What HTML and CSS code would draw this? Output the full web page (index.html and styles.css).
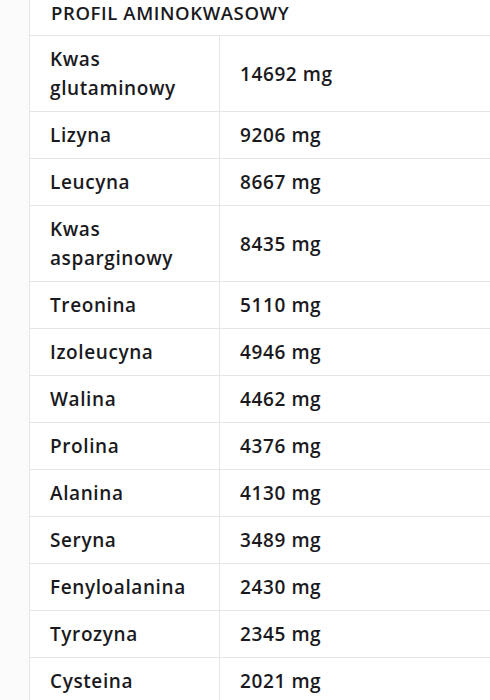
FILE: index.html
```html
<!DOCTYPE html>
<html lang="pl">
<head>
<meta charset="utf-8">
<title>Profil aminokwasowy</title>
<link rel="stylesheet" href="styles.css">
</head>
<body>
<div class="wrap">
<table class="amino">
<thead>
<tr><th colspan="2">PROFIL AMINOKWASOWY</th></tr>
</thead>
<tbody>
<tr><td class="name">Kwas<br>glutaminowy</td><td>14692 mg</td></tr>
<tr><td class="name">Lizyna</td><td>9206 mg</td></tr>
<tr><td class="name">Leucyna</td><td>8667 mg</td></tr>
<tr><td class="name">Kwas<br>asparginowy</td><td>8435 mg</td></tr>
<tr><td class="name">Treonina</td><td>5110 mg</td></tr>
<tr><td class="name">Izoleucyna</td><td>4946 mg</td></tr>
<tr><td class="name">Walina</td><td>4462 mg</td></tr>
<tr><td class="name">Prolina</td><td>4376 mg</td></tr>
<tr><td class="name">Alanina</td><td>4130 mg</td></tr>
<tr><td class="name">Seryna</td><td>3489 mg</td></tr>
<tr><td class="name">Fenyloalanina</td><td>2430 mg</td></tr>
<tr><td class="name">Tyrozyna</td><td>2345 mg</td></tr>
<tr><td class="name">Cysteina</td><td>2021 mg</td></tr>
</tbody>
</table>
</div>
</body>
</html>
```
FILE: styles.css
```css
html, body {
  margin: 0;
  padding: 0;
  background: #fbfbfb;
}
.wrap {
  padding-left: 29px;
  overflow: hidden;
  height: 700px;
}
.amino {
  border-collapse: collapse;
  width: 520px;
  background: #fff;
  font-family: "Open Sans", "Noto Sans", sans-serif;
  font-weight: 600;
  color: #1a1a1e;
  font-size: 19px;
  letter-spacing: 0.6px;
}
.amino th {
  text-align: left;
  font-size: 18.5px;
  font-weight: 600;
  letter-spacing: 0.6px;
  line-height: 26px;
  padding: 0 21px 9px 21px;
  border-left: 1px solid #e6e6e6;
  border-bottom: 1px solid #e6e6e6;
}
.amino td {
  line-height: 29px;
  padding: 9px 21px 8px 20px;
  border: 1px solid #e6e6e6;
  vertical-align: middle;
}
.amino td.name {
  width: 148px;
}
```
